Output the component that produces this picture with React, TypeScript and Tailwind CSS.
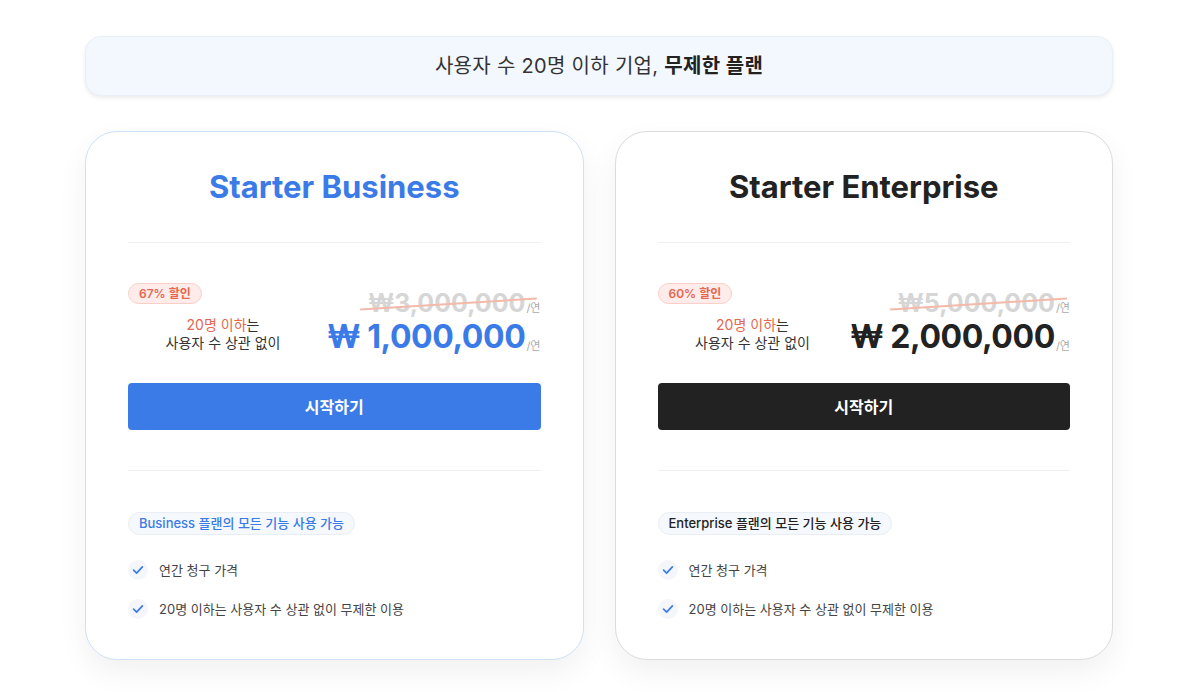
import React from "react";

const font = { fontFamily: 'Inter, "Noto Sans CJK KR", sans-serif' };

function Check() {
  return (
    <span className="flex h-[20px] w-[20px] shrink-0 items-center justify-center rounded-full bg-[#f4f6f9]">
      <svg width="12" height="12" viewBox="0 0 12 12" fill="none">
        <path d="M1.6 6.2 L4.6 9.1 L10.4 2.9" stroke="#3b7be8" strokeWidth="1.7" strokeLinecap="round" strokeLinejoin="round" />
      </svg>
    </span>
  );
}

type CardProps = {
  title: string;
  titleColor: string;
  borderColor: string;
  discount: string;
  oldPrice: string;
  newPrice: string;
  priceColor: string;
  buttonColor: string;
  pill: string;
  pillColor: string;
};

function Card(p: CardProps) {
  return (
    <div
      className={`flex flex-1 flex-col rounded-[32px] border bg-white px-[42px] pt-[37px] pb-[40px] shadow-[0_12px_30px_rgba(0,0,0,0.06)] ${p.borderColor}`}
    >
      <h2 className={`text-center text-[31px] font-bold leading-[36px] ${p.titleColor}`}>{p.title}</h2>
      <div className="mt-[37px] h-px bg-[#eef0f3]" />
      <div className="mt-[40px] flex items-start justify-between whitespace-nowrap">
        <div className="flex w-[190px] min-w-0 flex-col">
          <span className="self-start rounded-full border border-[#f9cfc7] bg-[#fdecea] px-[10px] text-[12px] font-semibold leading-[19px] text-[#e5674f]">
            {p.discount}
          </span>
          <div className="mt-[12px] text-center text-[14px] leading-[18px] text-[#333]">
            <div>
              <span className="text-[#e5674f]">20명 이하</span>는
            </div>
            <div>사용자 수 상관 없이</div>
          </div>
        </div>
        <div className="mt-[6px] flex shrink-0 flex-col items-end">
          <div className="flex items-end">
            <span className="relative text-[25px] font-bold leading-[28px] text-[#d6d6d6]">
              {p.oldPrice}
              <span className="absolute left-[-8px] right-[-12px] top-[14px] h-[2px] -rotate-[3.5deg] bg-[#f3b9a9]" />
            </span>
            <span className="ml-[1px] mb-[2px] text-[11px] leading-[14px] text-[#aaa]">/연</span>
          </div>
          <div className="flex items-end">
            <span className={`text-[32px] font-bold leading-[40px] tracking-[-0.4px] ${p.priceColor}`}>{p.newPrice}</span>
            <span className="ml-[1px] mb-[4px] text-[11px] leading-[14px] text-[#aaa]">/연</span>
          </div>
        </div>
      </div>
      <button
        className={`mt-[26px] flex h-[47px] items-center justify-center rounded-[4px] text-[16px] font-bold text-white ${p.buttonColor}`}
      >
        시작하기
      </button>
      <div className="mt-[40px] h-px bg-[#eef0f3]" />
      <span
        className={`mt-[41px] self-start rounded-full border border-[#e9eef5] bg-[#f5f8fc] px-[10px] text-[13px] font-medium leading-[21px] ${p.pillColor}`}
      >
        {p.pill}
      </span>
      <div className="mt-[25px] flex items-center gap-[11px] text-[13px] leading-[20px] text-[#444]">
        <Check />
        <span>연간 청구 가격</span>
      </div>
      <div className="mt-[19px] flex items-center gap-[11px] text-[13px] leading-[20px] text-[#444]">
        <Check />
        <span>20명 이하는 사용자 수 상관 없이 무제한 이용</span>
      </div>
    </div>
  );
}

export default function App() {
  return (
    <div className="min-h-[692px] bg-white pl-[85px] pt-[36px]" style={font}>
      <div className="w-[1028px]">
        <div className="flex h-[60px] items-center justify-center rounded-[16px] border border-[#e8eff8] bg-[#f3f8fe] text-[20px] tracking-[0.3px] text-[#333] shadow-[0_2px_4px_rgba(0,0,0,0.08)]">
          <span>
            사용자 수 20명 이하 기업, <span className="font-semibold text-[#222]">무제한 플랜</span>
          </span>
        </div>
        <div className="mt-[35px] flex gap-[31px]">
          <Card
            title="Starter Business"
            titleColor="text-[#3b7be8]"
            borderColor="border-[#cfe1f8]"
            discount="67% 할인"
            oldPrice="₩3,000,000"
            newPrice="₩ 1,000,000"
            priceColor="text-[#3b7be8]"
            buttonColor="bg-[#3b7be8]"
            pill="Business 플랜의 모든 기능 사용 가능"
            pillColor="text-[#3b7be8]"
          />
          <Card
            title="Starter Enterprise"
            titleColor="text-[#222]"
            borderColor="border-[#dcdcdc]"
            discount="60% 할인"
            oldPrice="₩5,000,000"
            newPrice="₩ 2,000,000"
            priceColor="text-[#222]"
            buttonColor="bg-[#222]"
            pill="Enterprise 플랜의 모든 기능 사용 가능"
            pillColor="text-[#222]"
          />
        </div>
      </div>
    </div>
  );
}
